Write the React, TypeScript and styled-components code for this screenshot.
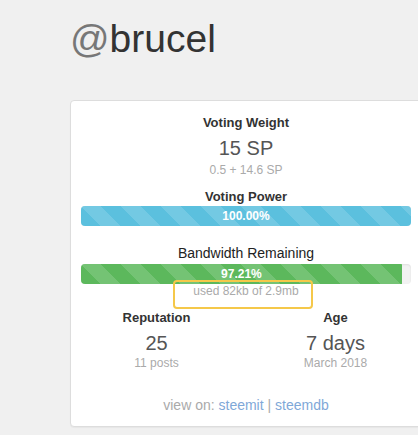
import React from "react";
import styled, { createGlobalStyle } from "styled-components";

const GlobalStyle = createGlobalStyle`
  html, body {
    margin: 0;
    padding: 0;
    background: #f0f0f0;
    font-family: "Helvetica Neue", "Liberation Sans", Arial, sans-serif;
    color: #333;
  }
`;

const Page = styled.div`
  padding: 0 0 0 70px;
  width: 418px;
  height: 435px;
  box-sizing: border-box;
  overflow: hidden;
`;

const Title = styled.h1`
  margin: 0;
  padding-top: 17px;
  height: 100px;
  box-sizing: border-box;
  font-size: 39px;
  font-weight: 400;
  line-height: 44px;
  color: #333;
  white-space: nowrap;
`;

const At = styled.span`
  color: #777;
`;

const Card = styled.div`
  width: 352px;
  box-sizing: border-box;
  background: #fff;
  border: 1px solid #ddd;
  border-radius: 4px;
  padding: 13px 10px 12px;
  text-align: center;
  box-shadow: 0 1px 1px rgba(0, 0, 0, 0.04);
`;

const Heading = styled.div<{ $gap?: number; $light?: boolean }>`
  font-size: ${(p) => (p.$light ? 14 : 13)}px;
  font-weight: ${(p) => (p.$light ? 400 : 700)};
  line-height: 18px;
  color: ${(p) => (p.$light ? "#222" : "#333")};
  margin-top: ${(p) => p.$gap ?? 0}px;
`;

const BigValue = styled.div`
  margin-top: 4px;
  font-size: 20px;
  font-weight: 300;
  line-height: 24px;
  color: #555;
`;

const Sub = styled.div<{ $gap?: number }>`
  margin-top: ${(p) => p.$gap ?? 0}px;
  font-size: 12px;
  line-height: 16px;
  color: #aaa;
`;

const Track = styled.div<{ $gap?: number }>`
  margin-top: ${(p) => p.$gap ?? 0}px;
  height: 20px;
  border-radius: 4px;
  background: #f2f2f2;
  box-shadow: inset 0 1px 2px rgba(0, 0, 0, 0.08);
  overflow: hidden;
`;

const Fill = styled.div<{ $color: string }>`
  height: 100%;
  background-color: ${(p) => p.$color};
  background-image: linear-gradient(
    45deg,
    rgba(255, 255, 255, 0.15) 25%,
    transparent 25%,
    transparent 50%,
    rgba(255, 255, 255, 0.15) 50%,
    rgba(255, 255, 255, 0.15) 75%,
    transparent 75%,
    transparent
  );
  background-size: 40px 40px;
  color: #fff;
  font-size: 12px;
  font-weight: 700;
  line-height: 20px;
  text-align: center;
`;

const UsedLine = styled.div`
  position: relative;
  font-size: 12px;
  line-height: 14px;
  color: #aaa;
`;

const Highlight = styled.div`
  position: absolute;
  left: 92px;
  top: -4px;
  width: 140px;
  height: 29px;
  box-sizing: border-box;
  border: 2px solid #f5c84a;
  border-radius: 4px;
  pointer-events: none;
`;

const Stats = styled.div`
  display: grid;
  grid-template-columns: 1fr 1fr;
  margin: 11px -14px 0;
`;

const Stat = styled.div``;

const Footer = styled.div`
  margin-top: 25px;
  font-size: 14px;
  line-height: 18px;
  color: #aaa;
`;

const Link = styled.a`
  color: #7fa8d8;
  text-decoration: none;
`;

export default function App() {
  const bandwidth = 97.21;
  return (
    <>
      <GlobalStyle />
      <Page>
        <Title>
          <At>@</At>brucel
        </Title>
        <Card>
          <Heading>Voting Weight</Heading>
          <BigValue>15 SP</BigValue>
          <Sub $gap={2}>0.5 + 14.6 SP</Sub>

          <Heading $gap={10}>Voting Power</Heading>
          <Track>
            <Fill $color="#5bc0de" style={{ width: "100%" }}>
              100.00%
            </Fill>
          </Track>

          <Heading $gap={18} $light>
            Bandwidth Remaining
          </Heading>
          <Track $gap={2}>
            <Fill $color="#5cb85c" style={{ width: `${bandwidth}%` }}>
              {bandwidth.toFixed(2)}%
            </Fill>
          </Track>
          <UsedLine>
            used 82kb of 2.9mb
            <Highlight />
          </UsedLine>

          <Stats>
            <Stat>
              <Heading>Reputation</Heading>
              <BigValue>25</BigValue>
              <Sub>11 posts</Sub>
            </Stat>
            <Stat>
              <Heading>Age</Heading>
              <BigValue>7 days</BigValue>
              <Sub>March 2018</Sub>
            </Stat>
          </Stats>

          <Footer>
            view on: <Link href="#">steemit</Link> | <Link href="#">steemdb</Link>
          </Footer>
        </Card>
      </Page>
    </>
  );
}
